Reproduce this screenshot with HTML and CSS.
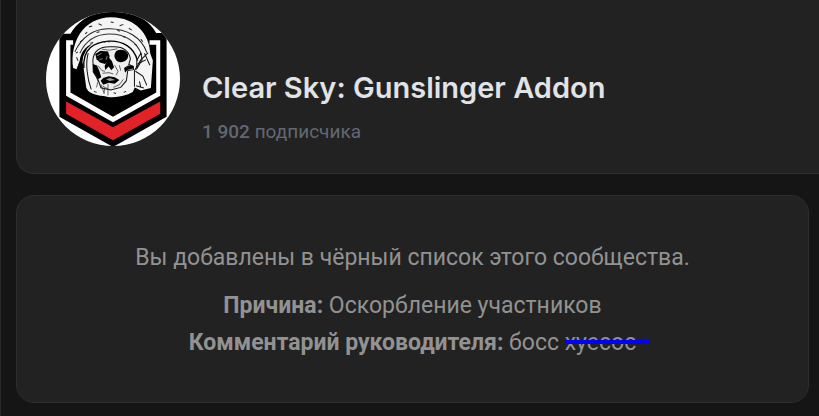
FILE: index.html
```html
<!DOCTYPE html>
<html lang="ru">
<head>
    <meta charset="UTF-8">
    <meta name="viewport" content="width=device-width, initial-scale=1.0">
    <title>Clear Sky: Gunslinger Addon</title>
    <link rel="stylesheet" href="styles.css">
</head>
<body>

    <header class="card group-header">
        <svg class="avatar" viewBox="17 37 400 400" aria-hidden="true">
            <rect x="17" y="37" width="400" height="400" fill="#fff"/>
            <!-- shield -->
            <path d="M57 102H90C116 58 160 34 218 34S322 56 346 100H377V350L217 440L57 350Z" fill="#000"/>
            <path d="M77 121H98V135H90V277L217 350L346 277V135H326V121H358V287L217 366L77 287Z" fill="#fff"/>
            <path d="M77 304L217 381L358 304V341L217 420L77 341Z" fill="#e32227"/>
            <!-- helmet -->
            <path d="M98 204C88 130 126 54 212 53C286 54 326 105 328 160L336 182L330 264L300 271L282 262L276 276C252 290 215 296 190 288C160 284 142 278 137 262L128 194L120 176L108 208Z" fill="#f4f4f4"/>
            <path d="M103 156C124 112 158 88 202 87C258 86 302 112 318 158" fill="none" stroke="#222" stroke-width="3"/>
            <path d="M118 160C136 122 166 104 204 103C252 102 288 124 303 166" fill="none" stroke="#333" stroke-width="3"/>
            <path d="M130 204C126 145 160 128 204 124C246 122 280 142 290 182" fill="none" stroke="#000" stroke-width="4"/>
            <path d="M118 178C124 154 134 142 158 129L140 146L128 170L124 200Z" fill="#000"/>
            <path d="M143 160C134 190 140 236 152 268M288 182L300 160L304 180L288 206Z" fill="none" stroke="#111" stroke-width="3"/>
            <path d="M311 160L327 196M322 158L300 180L281 212L281 260M284 214L306 228L318 256M290 192L315 180M296 244L300 262M286 257L309 264" fill="none" stroke="#111" stroke-width="3"/>
            <!-- skull -->
            <path d="M157 180C160 150 180 140 210 141C242 138 264 148 269 177L264 194L278 199V209L261 212L257 242L240 262L210 270L181 263L172 238L158 216Z" fill="#eee" stroke="#111" stroke-width="3"/>
            <path d="M164 162L180 153L202 155L207 168L203 184L193 192L178 188L168 178Z" fill="#000"/>
            <path d="M226 154C239 146 256 149 262 163C264 178 253 186 240 187C227 186 219 174 222 162Z" fill="#000"/>
            <path d="M204 172L214 184L220 202L212 211L204 200L194 210L192 198Z" fill="#000"/>
            <path d="M157 192L169 197L176 212L182 232L172 238L158 216ZM250 204L262 197L277 198V206L260 210L253 218Z" fill="#000"/>
            <path d="M188 234L204 229L222 232L236 240L222 251L204 248L188 254L180 242Z" fill="#000"/>
            <path d="M196 238L208 234L224 240L207 243Z" fill="#999"/>
            <path d="M172 197L184 212L193 214M184 148L206 151L230 147M222 196L232 214L226 226M236 196L240 212M186 220L205 218L218 222M186 258L204 268M202 251V286M181 253L190 278M218 262L236 254L248 238M164 222L172 244L168 262M192 264L190 282" fill="none" stroke="#222" stroke-width="2"/>
            <path d="M169 168L183 160M176 180L186 176M200 168L196 180" stroke="#bbb" stroke-width="2"/>
            <!-- scratches -->
            <path d="M145 82L155 79M174 72L184 77M210 67L219 68M237 78L248 74M264 85L273 91M119 126L126 121M149 130L158 128M189 127L198 125M203 127L208 125M246 110L255 113M281 132L288 137M106 160L112 156M108 172L113 183M168 98L177 96M134 102L140 97M249 277L256 274M219 278L226 280M230 92L238 94M300 118L306 126M160 274L168 277" stroke="#222" stroke-width="3"/>
        </svg>
        <div class="group-info">
            <h1>Clear Sky: Gunslinger Addon</h1>
            <p class="members"><span class="count">1 902</span> подписчика</p>
        </div>
    </header>

    <main class="card notice">
        <p class="notice-title">Вы добавлены в чёрный список этого сообщества.</p>
        <p><span class="label">Причина:</span> Оскорбление участников</p>
        <p><span class="label">Комментарий руководителя:</span> босс <span class="crossed">хуесос</span></p>
    </main>

</body>
</html>
```
FILE: styles.css
```css
body {
    font-family: Roboto, "Liberation Sans", sans-serif;
    background-color: #151515;
    border-left: 1px solid #292929;
    min-height: 100vh;
    box-sizing: border-box;
    margin: 0;
    padding: 0 10px 12px 15px;
    overflow: hidden;
}
.card {
    background-color: #222;
    border: 1px solid #2e2e2e;
    border-radius: 18px;
}
.group-header {
    display: flex;
    align-items: center;
    gap: 22px;
    margin-right: -10px;
    padding: 12px 0 27px 29px;
    border-top: 0;
    border-right: 0;
    border-radius: 0 0 0 18px;
}
.avatar {
    flex: none;
    width: 134px;
    height: 134px;
    border-radius: 50%;
}
.group-info {
    padding-top: 58px;
}
h1 {
    margin: 0;
    color: #e1e3e6;
    font-family: Inter, sans-serif;
    font-size: 29px;
    font-weight: 600;
    line-height: 36px;
}
.members {
    margin: 12px 0 0;
    color: #626873;
    font-size: 19px;
    line-height: 28px;
}
.members .count {
    font-weight: 500;
}
.notice {
    margin-top: 21px;
    padding: 43px 20px 41px;
    color: #929292;
    font-size: 23px;
    line-height: 37px;
    text-align: center;
}
.notice p {
    margin: 0;
}
.notice .notice-title {
    margin-bottom: 11px;
}
.notice .label {
    font-weight: bold;
}
.crossed {
    position: relative;
}
.crossed::after {
    content: "";
    position: absolute;
    top: 11px;
    left: 0;
    right: -14px;
    height: 4px;
    border-radius: 1px;
    background-color: #00f;
}
```
